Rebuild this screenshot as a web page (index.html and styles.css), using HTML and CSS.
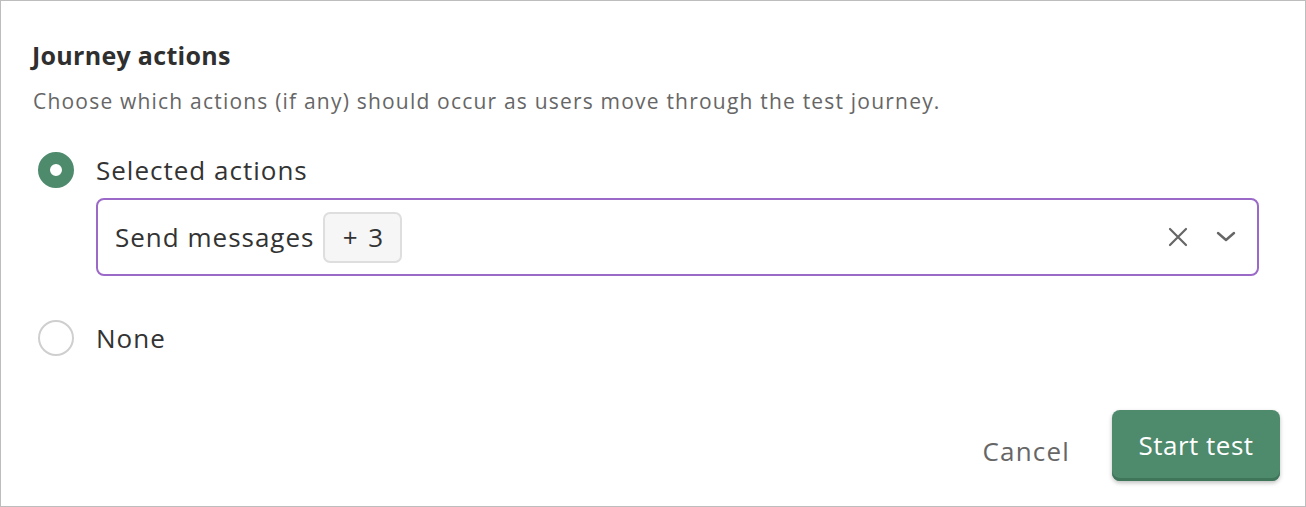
FILE: index.html
```html
<!DOCTYPE html>
<html lang="en">
<head>
<meta charset="utf-8">
<title>Journey actions</title>
<link rel="stylesheet" href="styles.css">
</head>
<body>
<div class="panel">
  <h2 class="title">Journey actions</h2>
  <p class="desc">Choose which actions (if any) should occur as users move through the test journey.</p>
  <div class="option">
    <span class="radio radio-on"></span>
    <span class="option-label">Selected actions</span>
  </div>
  <div class="select">
    <span class="select-value">Send messages</span>
    <span class="tag">+ 3</span>
    <span class="select-icons">
      <svg class="icon" width="22" height="22" viewBox="0 0 22 22"><path d="M3 3 L19 19 M19 3 L3 19" stroke="#666" stroke-width="2.2" fill="none" stroke-linecap="round"/></svg>
      <svg class="icon" width="22" height="22" viewBox="0 0 22 22"><path d="M3 7 L11 14 L19 7" stroke="#666" stroke-width="2.4" fill="none" stroke-linecap="round" stroke-linejoin="round"/></svg>
    </span>
  </div>
  <div class="option option-none">
    <span class="radio"></span>
    <span class="option-label">None</span>
  </div>
  <div class="actions">
    <button class="btn-cancel">Cancel</button>
    <button class="btn-primary">Start test</button>
  </div>
</div>
</body>
</html>
```
FILE: styles.css
```css
html, body {
  margin: 0;
  padding: 0;
  background: #fff;
}
.panel {
  box-sizing: border-box;
  width: 1306px;
  height: 507px;
  border: 1px solid #bdbdbd;
  padding: 40px 25px 0 31px;
  font-family: "Open Sans", "Lato", sans-serif;
  color: #333;
  display: flex;
  flex-direction: column;
}
.title {
  margin: 0;
  font-size: 25px;
  line-height: 28px;
  font-weight: 700;
  letter-spacing: 0.3px;
  color: #2f2f2f;
}
.desc {
  margin: 20px 0 0 1px;
  font-size: 21px;
  line-height: 24px;
  letter-spacing: 1.2px;
  color: #666;
}
.option {
  display: flex;
  align-items: center;
  margin-top: 39px;
  margin-left: 6px;
}
.option-none {
  margin-top: 44px;
}
.radio {
  box-sizing: border-box;
  width: 36px;
  height: 36px;
  border-radius: 50%;
  border: 2px solid #cfcfcf;
  background: #fff;
  flex: none;
}
.radio-on {
  border: 12px solid #4e8a6c;
}
.option-label {
  margin-left: 22px;
  font-size: 26px;
  line-height: 36px;
  letter-spacing: 1px;
  color: #333;
}
.select {
  box-sizing: border-box;
  margin: 10px 21px 0 64px;
  height: 78px;
  border: 2px solid #9b69c7;
  border-radius: 8px;
  display: flex;
  align-items: center;
  padding: 0 20px 0 17px;
}
.select-value {
  font-size: 26px;
  letter-spacing: 1px;
  color: #333;
}
.tag {
  box-sizing: border-box;
  margin-left: 9px;
  height: 51px;
  width: 79px;
  border: 2px solid #dedede;
  background: #f6f6f6;
  border-radius: 7px;
  display: flex;
  align-items: center;
  justify-content: center;
  font-size: 26px;
  word-spacing: 4px;
  color: #333;
}
.select-icons {
  margin-left: auto;
  display: flex;
  align-items: center;
  gap: 26px;
}
.icon {
  display: block;
}
.actions {
  margin-top: 54px;
  display: flex;
  justify-content: flex-end;
  align-items: center;
  gap: 42px;
}
.btn-cancel {
  border: none;
  background: none;
  padding: 0;
  margin-top: 10px;
  font-family: inherit;
  font-size: 26px;
  letter-spacing: 1.2px;
  color: #666;
}
.btn-primary {
  border: none;
  font-family: inherit;
  width: 168px;
  height: 71px;
  border-radius: 8px;
  background: #4e8a6c;
  color: #fff;
  font-size: 26px;
  letter-spacing: 0.5px;
  box-shadow: inset 0 -3px 0 #3f7559, 0 2px 4px rgba(0,0,0,0.25);
  padding-bottom: 2px;
}
```
